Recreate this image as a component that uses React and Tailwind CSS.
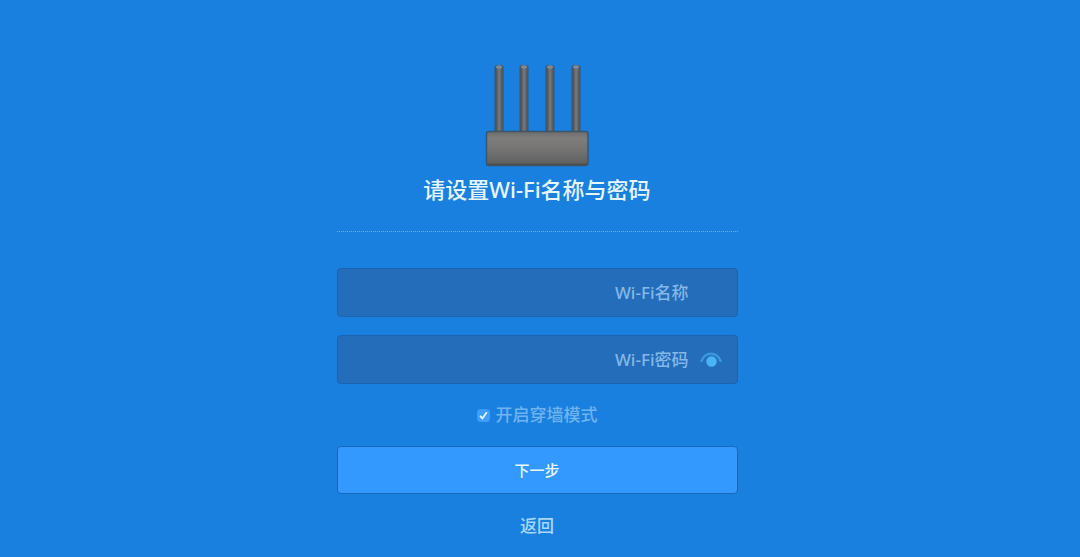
import React, { useState } from 'react';

const antennas = [10, 35, 61, 87];

const RouterImage = () => (
  <svg width="106" height="106" viewBox="0 0 106 106" className="block" aria-hidden="true">
    <defs>
      <linearGradient id="antenna" x1="0" x2="1" y1="0" y2="0">
        <stop offset="0" stopColor="#35526e" />
        <stop offset="0.25" stopColor="#56595c" />
        <stop offset="0.5" stopColor="#7d7b79" />
        <stop offset="0.75" stopColor="#5e6062" />
        <stop offset="1" stopColor="#35526e" />
      </linearGradient>
      <linearGradient id="body" x1="0" x2="0" y1="0" y2="1">
        <stop offset="0" stopColor="#6b6c6c" />
        <stop offset="0.2" stopColor="#807e7d" />
        <stop offset="0.5" stopColor="#767574" />
        <stop offset="1" stopColor="#5e5e5e" />
      </linearGradient>
    </defs>
    {antennas.map((x) => (
      <g key={x}>
        <path
          d={`M${x + 0.5} 5 Q${x + 0.5} 2 ${x + 3} 2 H${x + 7} Q${x + 9.5} 2 ${x + 9.5} 5 L${x + 9.5} 69 H${x + 0.5} Z`}
          fill="url(#antenna)"
        />
        <ellipse cx={x + 5} cy="4" rx="3" ry="1.5" fill="#7d8c99" />
      </g>
    ))}
    <rect x="2.5" y="68.5" width="101.5" height="34" rx="2.5" fill="url(#body)" stroke="#3d5569" strokeWidth="1.5" />
    <path d="M4 101.5 H103" stroke="#4a4f53" strokeWidth="2" />
  </svg>
);

const EyeIcon = () => (
  <svg width="22" height="18" viewBox="0 0 22 18" className="block" fill="none" aria-hidden="true">
    <path d="M1.5 10 C3.5 5 7 2.8 11 2.8 C15 2.8 18.5 5 20.5 10" stroke="#3a98de" strokeWidth="2.4" strokeLinecap="round" />
    <circle cx="11.5" cy="10.5" r="5.2" fill="#49b4f6" />
  </svg>
);

const fieldClass =
  'block w-full h-[49px] rounded border border-[#1c62ad] bg-[#236dba] pl-4 pr-12 text-right text-[17px] font-medium text-white placeholder:text-[#85b7e8] placeholder:opacity-100 outline-none focus:border-[#4aa6ff]';

const App = () => {
  const [showPassword, setShowPassword] = useState(false);
  const [wallMode, setWallMode] = useState(true);

  return (
    <div className="min-h-screen bg-[#1a80df] pt-[63px] pr-[6px] pb-4 font-['Noto_Sans','Noto_Sans_CJK_SC',sans-serif]">
      <form className="mx-auto flex w-full max-w-[401px] flex-col items-center" onSubmit={(e) => e.preventDefault()}>
        <RouterImage />
        <h1 className="mt-0.5 text-[22px] leading-9 font-medium text-[#e6f6ff]">请设置Wi-Fi名称与密码</h1>
        <div className="mt-6 w-full border-t border-dotted border-[#5db4ee]" />

        <input type="text" aria-label="Wi-Fi名称" placeholder="Wi-Fi名称" className={`mt-9 ${fieldClass}`} />

        <div className="relative mt-[18px] w-full">
          <input
            type={showPassword ? 'text' : 'password'}
            aria-label="Wi-Fi密码"
            placeholder="Wi-Fi密码"
            className={fieldClass}
          />
          <button
            type="button"
            aria-label="显示密码"
            className="absolute inset-y-0 right-4 flex items-center"
            onClick={() => setShowPassword(!showPassword)}
          >
            <EyeIcon />
          </button>
        </div>

        <label className="mt-4 flex items-center gap-[6px] text-[17px] leading-[30px] font-medium text-[#70b3f0]">
          <span className="relative flex">
            <input
              type="checkbox"
              checked={wallMode}
              onChange={(e) => setWallMode(e.target.checked)}
              className="peer h-[13px] w-[13px] appearance-none rounded-sm bg-[#3f9dfb]"
            />
            <svg viewBox="0 0 13 13" className="pointer-events-none absolute inset-0 hidden peer-checked:block" fill="none" aria-hidden="true">
              <path d="M3 6.8 L5.4 9.4 L9.8 3.2" stroke="#e9f8ff" strokeWidth="1.8" />
            </svg>
          </span>
          开启穿墙模式
        </label>

        <button
          type="submit"
          className="mt-4 h-12 w-full rounded border border-[#1767b8] bg-[#3399ff] text-[15px] font-medium text-[#e9f9ff] hover:bg-[#45a3ff]"
        >
          下一步
        </button>
        <a href="#" className="mt-4 text-[17px] leading-8 font-medium text-[#a9d6fa]">返回</a>
      </form>
    </div>
  );
};

export default App;
